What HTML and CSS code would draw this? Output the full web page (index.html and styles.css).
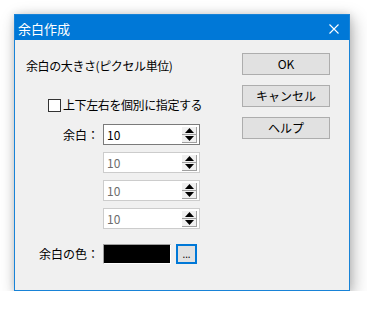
FILE: index.html
```html
<!DOCTYPE html>
<html lang="ja">
<head>
  <meta charset="UTF-8" />
  <title>余白作成</title>
  <link rel="stylesheet" href="styles.css">
</head>
<body>
  <div class="dialog">
    <div class="titlebar">
      <span class="title">余白作成</span>
      <svg class="close" width="10" height="10" viewBox="0 0 10 10">
        <path d="M0.5 0.5 L9.5 9.5 M9.5 0.5 L0.5 9.5" stroke="#fff" stroke-width="1.1" fill="none" />
      </svg>
    </div>
    <div class="content">
      <div class="left">
        <div class="size-label">余白の大きさ(ピクセル単位)</div>
        <label class="check-row">
          <span class="checkbox"></span>
          <span>上下左右を個別に指定する</span>
        </label>

        <div class="field">
          <span class="field-label">余白：</span>
          <div class="spin-box">
            <span class="value">10</span>
            <div class="spin">
              <div class="spin-btn"><svg width="9" height="5" viewBox="0 0 9 5"><polygon points="4.5,0 9,5 0,5" fill="#000" /></svg></div>
              <div class="spin-btn"><svg width="9" height="5" viewBox="0 0 9 5"><polygon points="0,0 9,0 4.5,5" fill="#000" /></svg></div>
            </div>
          </div>
        </div>
        <div class="field">
          <span class="field-label"></span>
          <div class="spin-box disabled">
            <span class="value">10</span>
            <div class="spin">
              <div class="spin-btn"><svg width="9" height="5" viewBox="0 0 9 5"><polygon points="4.5,0 9,5 0,5" fill="#000" /></svg></div>
              <div class="spin-btn"><svg width="9" height="5" viewBox="0 0 9 5"><polygon points="0,0 9,0 4.5,5" fill="#000" /></svg></div>
            </div>
          </div>
        </div>
        <div class="field">
          <span class="field-label"></span>
          <div class="spin-box disabled">
            <span class="value">10</span>
            <div class="spin">
              <div class="spin-btn"><svg width="9" height="5" viewBox="0 0 9 5"><polygon points="4.5,0 9,5 0,5" fill="#000" /></svg></div>
              <div class="spin-btn"><svg width="9" height="5" viewBox="0 0 9 5"><polygon points="0,0 9,0 4.5,5" fill="#000" /></svg></div>
            </div>
          </div>
        </div>
        <div class="field">
          <span class="field-label"></span>
          <div class="spin-box disabled">
            <span class="value">10</span>
            <div class="spin">
              <div class="spin-btn"><svg width="9" height="5" viewBox="0 0 9 5"><polygon points="4.5,0 9,5 0,5" fill="#000" /></svg></div>
              <div class="spin-btn"><svg width="9" height="5" viewBox="0 0 9 5"><polygon points="0,0 9,0 4.5,5" fill="#000" /></svg></div>
            </div>
          </div>
        </div>

        <div class="field color-row">
          <span class="field-label">余白の色：</span>
          <div class="swatch"></div>
          <button class="pick-btn">...</button>
        </div>
      </div>
      <div class="buttons">
        <button class="btn">OK</button>
        <button class="btn">キャンセル</button>
        <button class="btn">ヘルプ</button>
      </div>
    </div>
  </div>
</body>
</html>
```

FILE: styles.css
```css
body {
  margin: 0;
  background: #ffffff;
  font-family: "Noto Sans CJK JP", "Noto Sans", sans-serif;
  font-size: 12px;
  color: #000;
}

.dialog {
  margin: 14px 0 0 14px;
  width: 334px;
  border: 1px solid #1883d7;
  background: #f0f0f0;
  box-shadow: 3px 5px 16px rgba(0, 0, 0, 0.28), 0 0 8px rgba(0, 0, 0, 0.12);
}

.titlebar {
  height: 25px;
  background: #0078d7;
  display: flex;
  align-items: center;
  justify-content: space-between;
  padding: 0 10px 0 3px;
  color: #fff;
}

.title {
  font-size: 13px;
  line-height: 25px;
  margin-top: 1px;
}

.close {
  margin-top: 3px;
}

.content {
  height: 250px;
  display: flex;
  justify-content: space-between;
  padding: 13px 19px 0 11px;
  box-sizing: border-box;
}

.left {
  display: flex;
  flex-direction: column;
}

.size-label {
  margin-top: 5px;
  line-height: 16px;
  letter-spacing: -0.4px;
}

.check-row {
  margin: 23px 0 0 22px;
  display: flex;
  align-items: center;
  height: 16px;
  line-height: 16px;
  letter-spacing: -0.4px;
}

.checkbox {
  width: 11px;
  height: 11px;
  border: 1px solid #333;
  background: #fff;
  margin-right: 2px;
}

.field {
  display: flex;
  align-items: center;
  height: 21px;
  margin-top: 7px;
}

.check-row + .field {
  margin-top: 11px;
}

.field-label {
  width: 73px;
  margin-right: 4px;
  text-align: right;
  line-height: 16px;
}

.spin-box {
  width: 90px;
  height: 19px;
  border: 1px solid #7a7a7a;
  background: #fff;
  display: flex;
  align-items: center;
  justify-content: space-between;
  padding: 0 2px 0 3px;
}

.spin-box.disabled {
  border-color: #cccccc;
  color: #6d6d6d;
}

.value {
  line-height: 16px;
  font-size: 12px;
}

.spin {
  width: 15px;
  height: 16px;
  display: flex;
  flex-direction: column;
}

.spin-btn {
  height: 7px;
  background: #f0f0f0;
  border-right: 1px solid #a0a0a0;
  border-bottom: 1px solid #a0a0a0;
  display: flex;
  align-items: center;
  justify-content: center;
}

.color-row {
  margin-top: 15px;
  height: 20px;
}

.swatch {
  width: 68px;
  height: 20px;
  background: #000;
  border-top: 1px solid #a0a0a0;
  border-left: 1px solid #a0a0a0;
  border-right: 1px solid #fff;
  border-bottom: 1px solid #fff;
  box-sizing: border-box;
}

.pick-btn {
  margin-left: 5px;
  width: 21px;
  height: 20px;
  border: 2px solid #0078d7;
  background: #e1e1e1;
  font-family: "Noto Sans", sans-serif;
  font-size: 10px;
  line-height: 14px;
  padding: 0;
  color: #000;
}

.buttons {
  display: flex;
  flex-direction: column;
  gap: 10px;
}

.btn {
  width: 88px;
  height: 22px;
  background: #e1e1e1;
  border: 1px solid #adadad;
  font-family: "Noto Sans CJK JP", "Noto Sans", sans-serif;
  font-size: 12px;
  font-weight: 400;
  line-height: 18px;
  padding: 0;
  color: #000;
}
```
